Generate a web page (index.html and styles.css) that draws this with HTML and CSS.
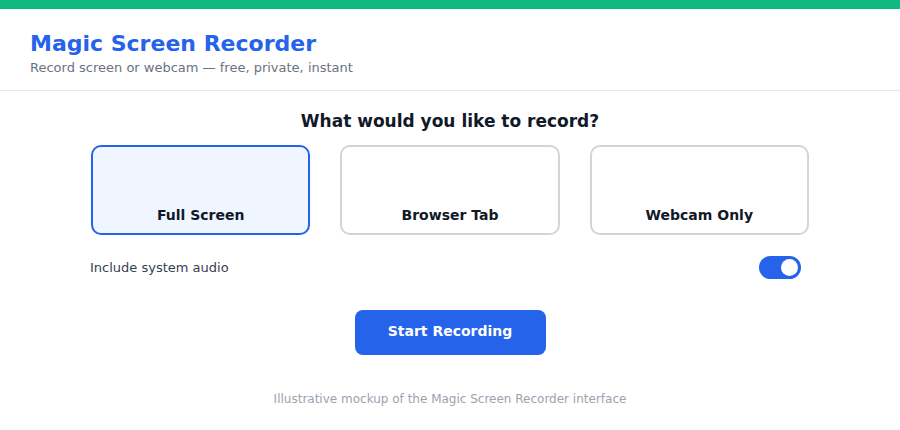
FILE: index.html
```html
<!DOCTYPE html>
<html lang="en">
<head>
<meta charset="utf-8">
<title>Magic Screen Recorder</title>
<link rel="stylesheet" href="styles.css">
</head>
<body>
<div class="topbar"></div>
<header class="header">
  <h1 class="title">Magic Screen Recorder</h1>
  <p class="subtitle">Record screen or webcam — free, private, instant</p>
</header>
<main class="main">
  <h2 class="question">What would you like to record?</h2>
  <div class="options">
    <div class="option selected"><span class="option-label">Full Screen</span></div>
    <div class="option"><span class="option-label">Browser Tab</span></div>
    <div class="option"><span class="option-label">Webcam Only</span></div>
  </div>
  <div class="audio-row">
    <span class="audio-label">Include system audio</span>
    <span class="toggle"><span class="knob"></span></span>
  </div>
  <div class="actions">
    <button class="start">Start Recording</button>
  </div>
  <p class="note">Illustrative mockup of the Magic Screen Recorder interface</p>
</main>
</body>
</html>
```
FILE: styles.css
```css
* { box-sizing: border-box; }
html, body { margin: 0; padding: 0; background: #ffffff; }
body { font-family: "DejaVu Sans", sans-serif; color: #111827; width: 900px; height: 430px; overflow: hidden; }
.topbar { height: 9px; background: #10b981; }
.header { padding: 21px 30px 0; height: 82px; border-bottom: 1px solid #e5e7eb; }
.title { margin: 0; font-size: 22px; line-height: 28px; font-weight: bold; color: #2563eb; }
.subtitle { margin: 1px 0 0; font-size: 13px; line-height: 18px; color: #6b7280; }
.main { width: 720px; margin: 0 auto; display: flex; flex-direction: column; }
.question { margin: 19px 0 0; text-align: center; font-size: 17px; line-height: 22px; font-weight: bold; color: #111827; }
.options { margin-top: 13px; display: grid; grid-template-columns: repeat(3, 1fr); gap: 30px; padding: 0 1px; }
.option { height: 90px; border: 2px solid #d1d5db; border-radius: 10px; background: #ffffff; display: flex; align-items: flex-end; justify-content: center; padding-bottom: 9px; }
.option.selected { border-color: #2563eb; background: #eff6ff; }
.option-label { font-size: 14px; font-weight: bold; color: #111827; line-height: 18px; }
.audio-row { margin-top: 21px; display: flex; align-items: center; justify-content: space-between; padding: 0 9px 0 0; height: 23px; }
.audio-label { font-size: 13px; color: #374151; }
.toggle { width: 42px; height: 23px; border-radius: 12px; background: #2563eb; display: flex; align-items: center; justify-content: flex-end; padding: 0 3px; }
.knob { width: 17px; height: 17px; border-radius: 50%; background: #ffffff; }
.actions { margin-top: 31px; display: flex; justify-content: center; }
.start { width: 191px; height: 45px; border: none; border-radius: 8px; background: #2563eb; color: #ffffff; font-family: "DejaVu Sans", sans-serif; font-size: 14px; font-weight: bold; padding: 0 0 3px; }
.note { margin: 37px 0 0; text-align: center; font-size: 12px; color: #9ca3af; }
```
